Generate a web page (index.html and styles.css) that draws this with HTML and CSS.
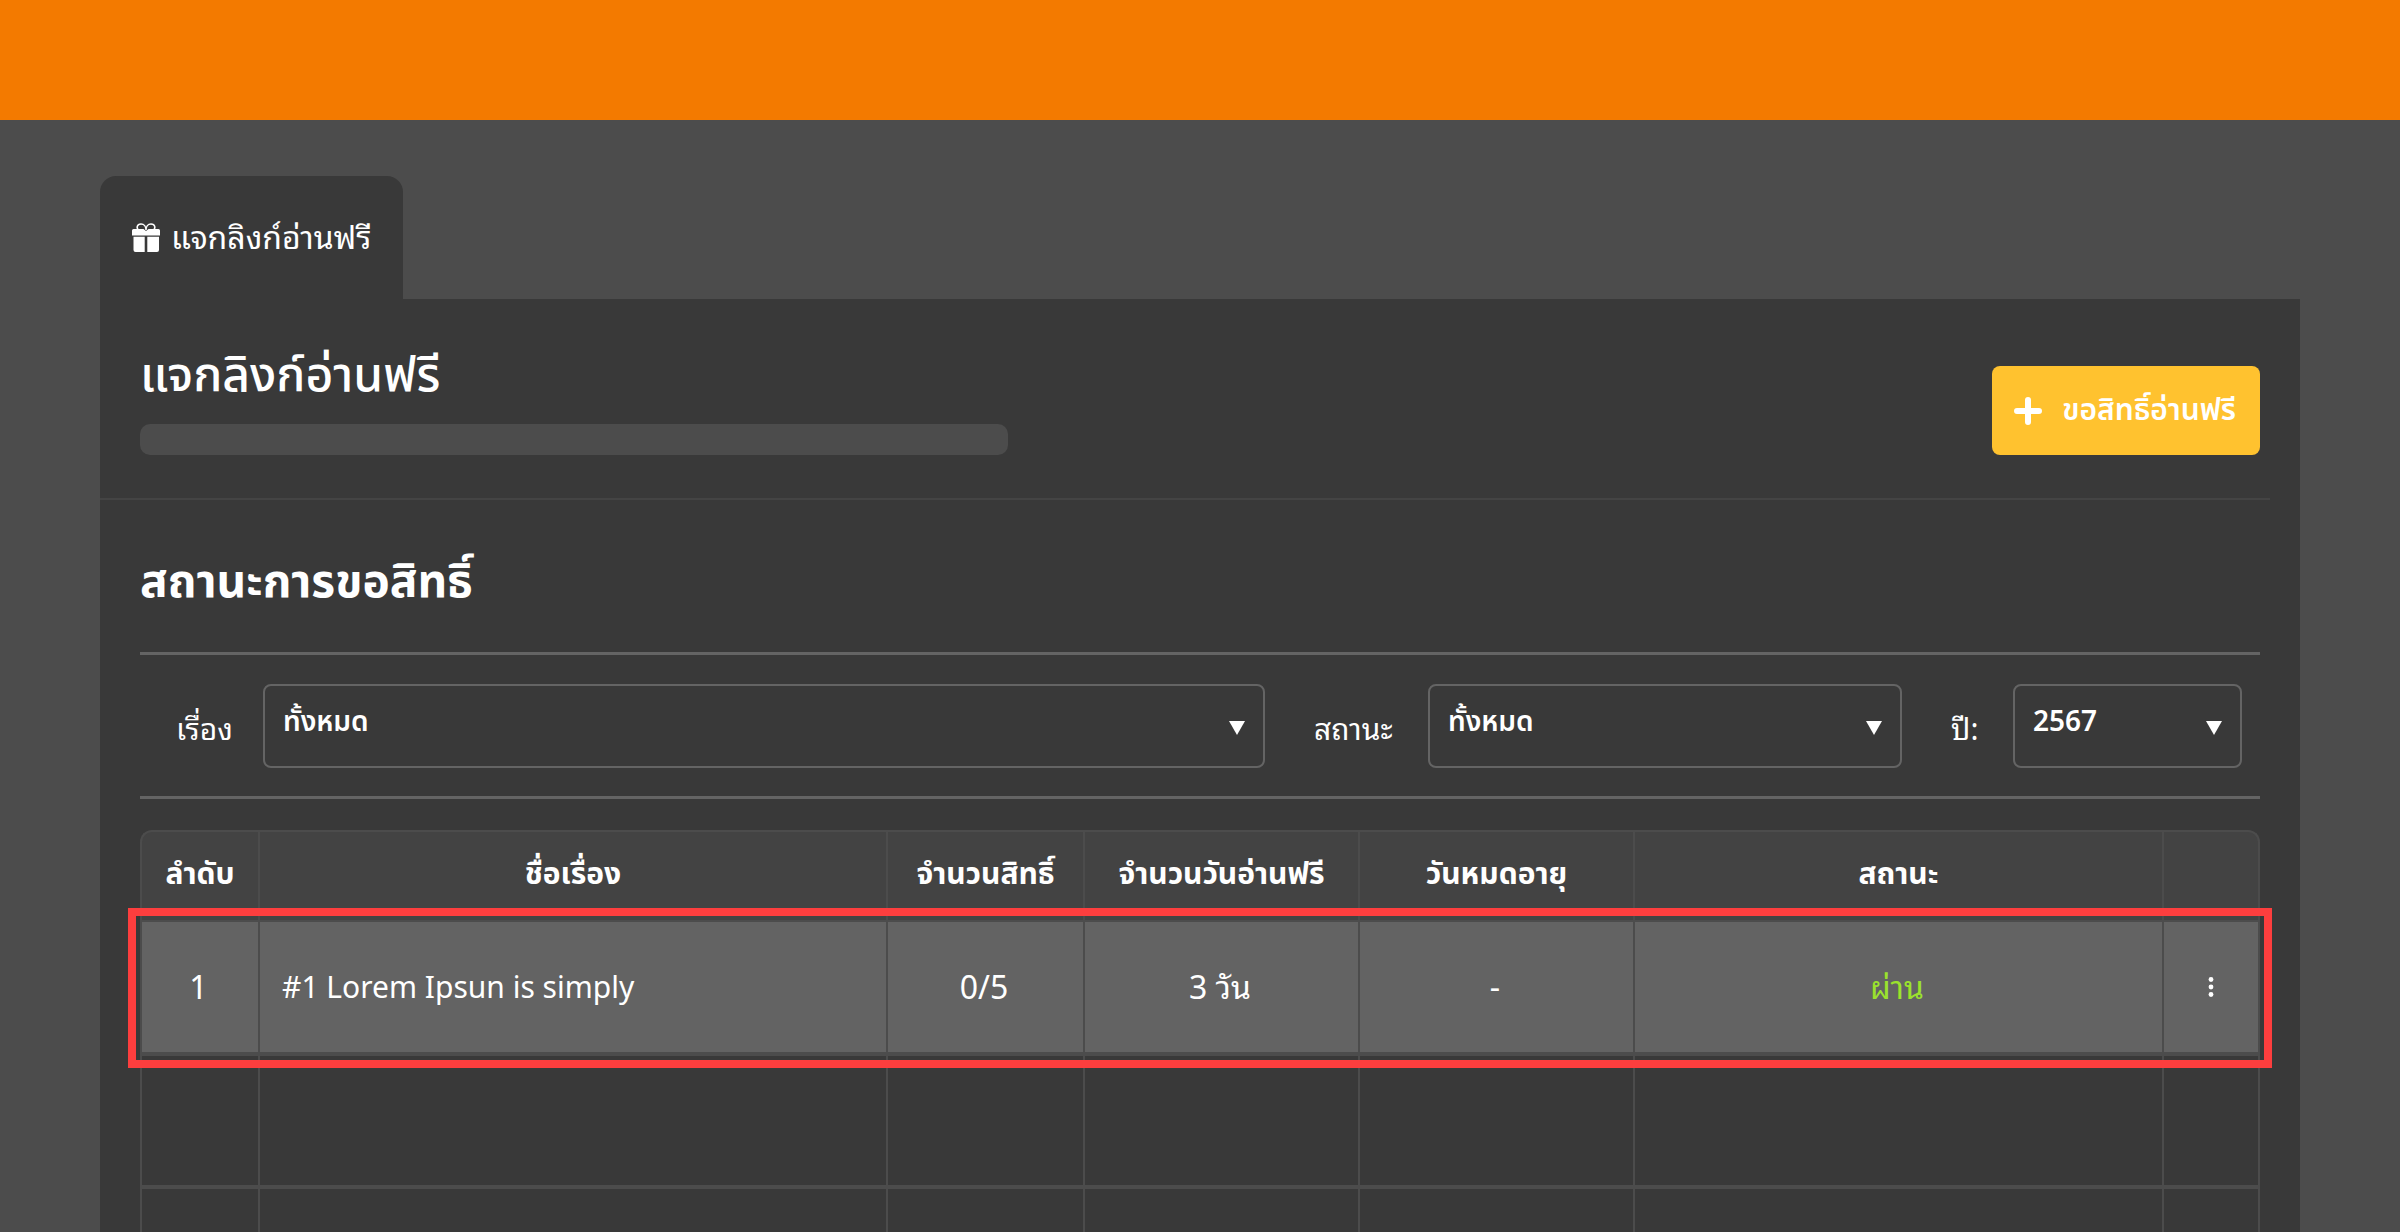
FILE: index.html
```html
<!DOCTYPE html>
<html lang="th">
<head>
  <meta charset="utf-8">
  <meta name="viewport" content="width=device-width, initial-scale=1">
  <title>แจกลิงก์อ่านฟรี</title>
  <link rel="stylesheet" href="styles.css">
</head>
<body>
  <header class="topbar"></header>
  <main class="page">
    <nav class="tabs">
      <a class="tab" href="#free-links">
        <svg class="tab-icon" viewBox="0 0 28 29" aria-hidden="true">
          <path d="M7.500 7.500C3.500 5.500 5 1 9 1c3 0 5 2.500 5 6 0-3.500 2-6 5-6 4 0 5.500 4.500 1.500 6.500" fill="none" stroke="currentColor" stroke-width="1.500"/>
          <path d="M1.500 6H11.500l2.500 2 2.500-2h10A1.500 1.500 0 0 1 28 7.500V12.500H0V7.500A1.500 1.500 0 0 1 1.500 6z" fill="currentColor"/>
          <path d="M1.500 13.800h11.200V29H3.500a2 2 0 0 1-2-2zM15.300 13.800h11.700V27a2 2 0 0 1-2 2h-9.700z" fill="currentColor"/>
        </svg>
        <span>แจกลิงก์อ่านฟรี</span>
      </a>
    </nav>

    <section class="panel" id="free-links">
      <div class="intro">
        <div class="intro-text">
          <h1 class="title">แจกลิงก์อ่านฟรี</h1>
          <div class="placeholder"></div>
        </div>
        <button class="request" type="button">
          <svg class="request-icon" viewBox="0 0 28 28" aria-hidden="true">
            <path d="M14 3v22M3 14h22" fill="none" stroke="currentColor" stroke-width="6" stroke-linecap="round"/>
          </svg>
          <span>ขอสิทธิ์อ่านฟรี</span>
        </button>
      </div>
      <hr class="divider">

      <div class="content">
        <h2 class="subtitle">สถานะการขอสิทธิ์</h2>

        <form class="filters">
          <label class="filter-label" for="story">เรื่อง</label>
          <div class="select">
            <select id="story"><option>ทั้งหมด</option></select>
          </div>
          <label class="filter-label" for="status">สถานะ</label>
          <div class="select">
            <select id="status"><option>ทั้งหมด</option></select>
          </div>
          <label class="filter-label" for="year">ปี:</label>
          <div class="select">
            <select id="year"><option>2567</option></select>
          </div>
        </form>

        <table class="requests">
          <colgroup>
            <col class="col-no"><col><col class="col-count"><col class="col-date"><col class="col-date"><col class="col-status"><col class="col-menu">
          </colgroup>
          <thead>
            <tr>
              <th>ลำดับ</th><th>ชื่อเรื่อง</th><th>จำนวนสิทธิ์</th><th>จำนวนวันอ่านฟรี</th><th>วันหมดอายุ</th><th>สถานะ</th><th></th>
            </tr>
          </thead>
          <tbody>
            <tr class="selected">
              <td>1</td>
              <td class="name">#1 Lorem Ipsun is simply</td>
              <td>0/5</td>
              <td>3 วัน</td>
              <td>-</td>
              <td class="passed">ผ่าน</td>
              <td>
                <button class="menu" type="button" aria-label="เมนู">
                  <svg viewBox="0 0 6 20" aria-hidden="true">
                    <circle cx="3" cy="2.500" r="2.400"/><circle cx="3" cy="10" r="2.400"/><circle cx="3" cy="17.500" r="2.400"/>
                  </svg>
                </button>
              </td>
            </tr>
            <tr><td></td><td></td><td></td><td></td><td></td><td></td><td></td></tr>
            <tr><td></td><td></td><td></td><td></td><td></td><td></td><td></td></tr>
          </tbody>
        </table>
      </div>
    </section>
  </main>
</body>
</html>
```

FILE: styles.css
```css
:root {
  --panel: #393939;
  --page: #4c4c4c;
  --line: #4c4c4c;
  --rule: #646464;
  --plain: "Noto Sans Thai", "Noto Sans", sans-serif;
  --looped: "Noto Sans Thai Looped", "Noto Sans", sans-serif;
}

* { box-sizing: border-box; }

html { height: 100%; overflow: hidden; }

body {
  display: flex;
  flex-direction: column;
  height: 100%;
  margin: 0;
  overflow: hidden;
  background: var(--page);
  color: #fff;
  font-family: var(--plain);
  font-size: 30px;
}

.topbar {
  flex: none;
  height: 120px;
  background: #f37a00;
}

.page {
  flex: 1;
  min-height: 0;
  padding: 56px 100px 0;
  overflow: hidden;
}

.tabs { display: flex; }

.tab {
  display: flex;
  align-items: flex-start;
  gap: 11px;
  height: 123px;
  padding: 39px 32px 0;
  border-radius: 16px 16px 0 0;
  background: var(--panel);
  color: #fff;
  font-family: var(--looped);
  font-size: 32px;
  line-height: 40px;
  text-decoration: none;
}

.tab-icon {
  width: 28px;
  height: 29px;
  margin-top: 8px;
}

.panel { background: var(--panel); }

.intro {
  display: flex;
  align-items: flex-end;
  justify-content: space-between;
  padding: 42px 40px 43px;
}

.intro-text { width: 868px; }

.title {
  margin: 0 0 11px;
  font-size: 48px;
  font-weight: 500;
  line-height: 72px;
}

.placeholder {
  height: 31px;
  border-radius: 10px;
  background: var(--page);
}

.request {
  display: flex;
  align-items: center;
  justify-content: space-between;
  width: 268px;
  height: 89px;
  padding: 0 24px 0 22px;
  border: 0;
  border-radius: 8px;
  background: #ffc22f;
  color: #fff;
  font-family: var(--plain);
  font-size: 30px;
  font-weight: 600;
  line-height: 40px;
}

.request-icon { width: 28px; height: 28px; }

.divider {
  height: 2px;
  margin: 0 30px 0 0;
  border: 0;
  background: #444;
}

.content { padding: 47px 40px 0; }

.subtitle {
  margin: 0 0 33px;
  font-size: 46px;
  font-weight: 700;
  line-height: 72px;
}

.filters {
  display: grid;
  grid-template-columns: 87px 1002fr 163px 474fr 111px 229fr;
  align-items: center;
  margin-bottom: 31px;
  padding: 29px 18px 28px 36px;
  border: solid var(--rule);
  border-width: 3px 0;
}

.filter-label {
  padding-top: 2px;
  font-family: var(--looped);
  font-size: 30px;
  line-height: 40px;
}

.select + .filter-label { padding-left: 49px; }

.select { position: relative; }

.select::after {
  content: "";
  position: absolute;
  top: 37px;
  right: 20px;
  width: 16px;
  height: 14px;
  background: #fff;
  clip-path: polygon(0 0, 100% 0, 50% 100%);
  pointer-events: none;
}

select {
  display: block;
  width: 100%;
  height: 84px;
  padding: 0 48px 8px 18px;
  border: 2px solid var(--rule);
  border-radius: 8px;
  appearance: none;
  background: transparent;
  color: #fff;
  font-family: var(--plain);
  font-size: 28px;
  font-weight: 600;
}

.requests {
  width: 100%;
  border-spacing: 0;
  table-layout: fixed;
}

.col-no { width: 118px; }
.col-count { width: 197px; }
.col-date { width: 275px; }
.col-status { width: 529px; }
.col-menu { width: 98px; }

th, td {
  padding: 0;
  border-left: 2px solid var(--line);
  text-align: center;
}

th:last-child, td:last-child { border-right: 2px solid var(--line); }

th {
  height: 90px;
  padding-bottom: 3px;
  border-top: 2px solid var(--line);
  background: #434343;
  font-size: 30px;
  font-weight: 700;
  line-height: 40px;
}

th:first-child { border-top-left-radius: 12px; }
th:last-child { border-top-right-radius: 12px; }

td {
  height: 133px;
  padding: 0 3px 4px 0;
  border-bottom: 4px solid var(--line);
  font-family: var(--looped);
  font-size: 32px;
  line-height: 40px;
}

.selected { outline: 8px solid #fd3e3e; outline-offset: 4px; }

.selected td {
  height: 136px;
  border-top: 2px solid var(--line);
  background: #636363;
}

td.name {
  padding-left: 22px;
  font-size: 30px;
  text-align: left;
}

td.passed { color: #9be22d; }

td:last-child { padding: 0; }

.menu {
  display: flex;
  margin: 0 auto;
  padding: 8px;
  border: 0;
  background: none;
  color: #fff;
}

.menu svg { width: 6px; height: 20px; fill: currentColor; }
```
